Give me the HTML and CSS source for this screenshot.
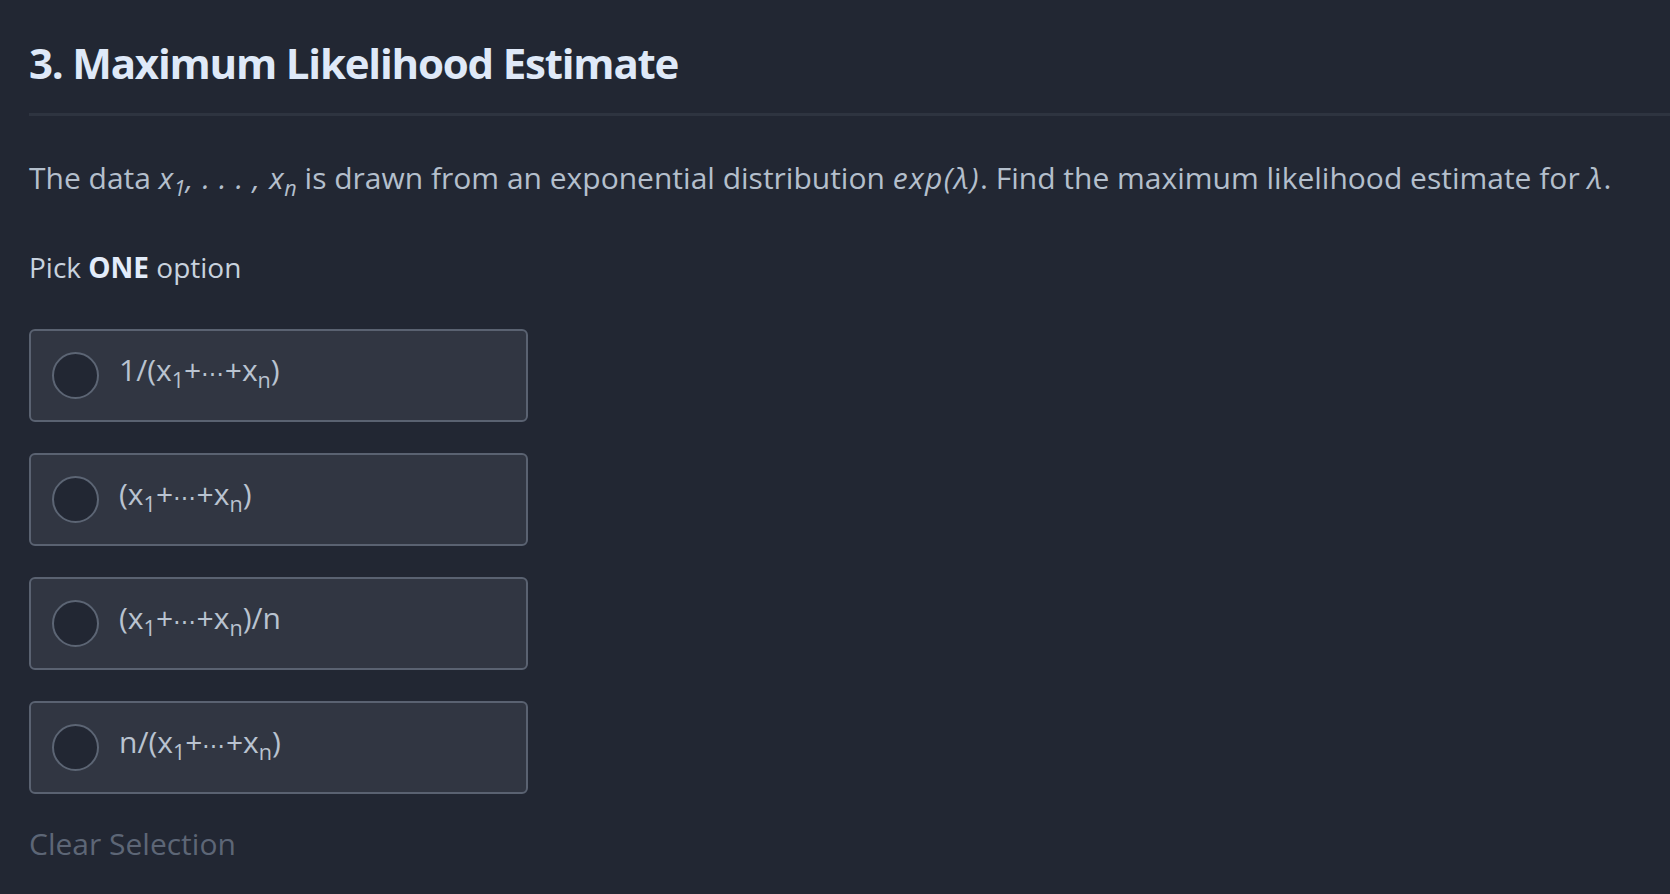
FILE: index.html
```html
<!DOCTYPE html>
<html lang="en">
<head>
<meta charset="utf-8">
<title>Maximum Likelihood Estimate</title>
<link rel="stylesheet" href="styles.css">
</head>
<body>
<main class="question">
  <h1 class="title">3. Maximum Likelihood Estimate</h1>
  <hr class="divider">
  <p class="prompt">The data <i class="math seq">x<sub>1</sub>, . . . , x<sub>n</sub></i> is drawn from an exponential distribution <i class="math">exp(λ)</i>. Find the maximum likelihood estimate for <i class="math">λ</i>.</p>
  <p class="pick">Pick <b>ONE</b> option</p>
  <div class="options">
    <label class="option"><span class="radio"></span><span class="opt-text">1/(x<sub>1</sub>+<span class="dots">⋯</span>+x<sub>n</sub>)</span></label>
    <label class="option"><span class="radio"></span><span class="opt-text">(x<sub>1</sub>+<span class="dots">⋯</span>+x<sub>n</sub>)</span></label>
    <label class="option"><span class="radio"></span><span class="opt-text">(x<sub>1</sub>+<span class="dots">⋯</span>+x<sub>n</sub>)/n</span></label>
    <label class="option"><span class="radio"></span><span class="opt-text">n/(x<sub>1</sub>+<span class="dots">⋯</span>+x<sub>n</sub>)</span></label>
  </div>
  <div class="clear">Clear Selection</div>
</main>
</body>
</html>
```

FILE: styles.css
```css
html, body {
  margin: 0;
  padding: 0;
  background: #222733;
  height: 100%;
}
body {
  font-family: "Open Sans", "Noto Sans", sans-serif;
  color: #b4bfcc;
  overflow: hidden;
}
.question {
  padding: 38px 0 0 29px;
}
.title {
  margin: 0;
  font-size: 42px;
  line-height: 1.2;
  font-weight: 700;
  letter-spacing: -1.2px;
  color: #dfe9f8;
}
.divider {
  margin: 25px 0 0 0;
  border: 0;
  height: 3px;
  background: #2e3440;
}
.prompt {
  margin: 41px 0 0 0;
  font-size: 30px;
  line-height: 42px;
  color: #b4bfcc;
}
.math {
  letter-spacing: 1.5px;
}
.math.seq {
  letter-spacing: 0.7px;
}
.math sub {
  letter-spacing: 0;
}
sub {
  font-size: 0.72em;
  line-height: 0;
  vertical-align: -0.32em;
}
.pick {
  margin: 47px 0 0 0;
  font-size: 28px;
  line-height: 42px;
  color: #c8d2de;
}
.pick b {
  font-weight: 700;
  color: #e3ecfa;
}
.options {
  margin-top: 41px;
  display: flex;
  flex-direction: column;
  gap: 31px;
  width: 499px;
}
.option {
  box-sizing: border-box;
  height: 93px;
  display: flex;
  align-items: center;
  gap: 20px;
  padding-left: 21px;
  background: #313642;
  border: 2px solid #5a6271;
  border-radius: 6px;
}
.radio {
  box-sizing: border-box;
  width: 47px;
  height: 47px;
  border-radius: 50%;
  border: 2px solid #5c6574;
  background: #222733;
  flex: none;
}
.opt-text {
  font-size: 30px;
  line-height: 42px;
  margin-bottom: 8px;
  color: #b9c3d0;
}
.dots {
  font-size: 0.75em;
  letter-spacing: 0.5px;
}
.clear {
  margin-top: 29px;
  font-size: 30px;
  line-height: 42px;
  color: #5d6676;
}
```
